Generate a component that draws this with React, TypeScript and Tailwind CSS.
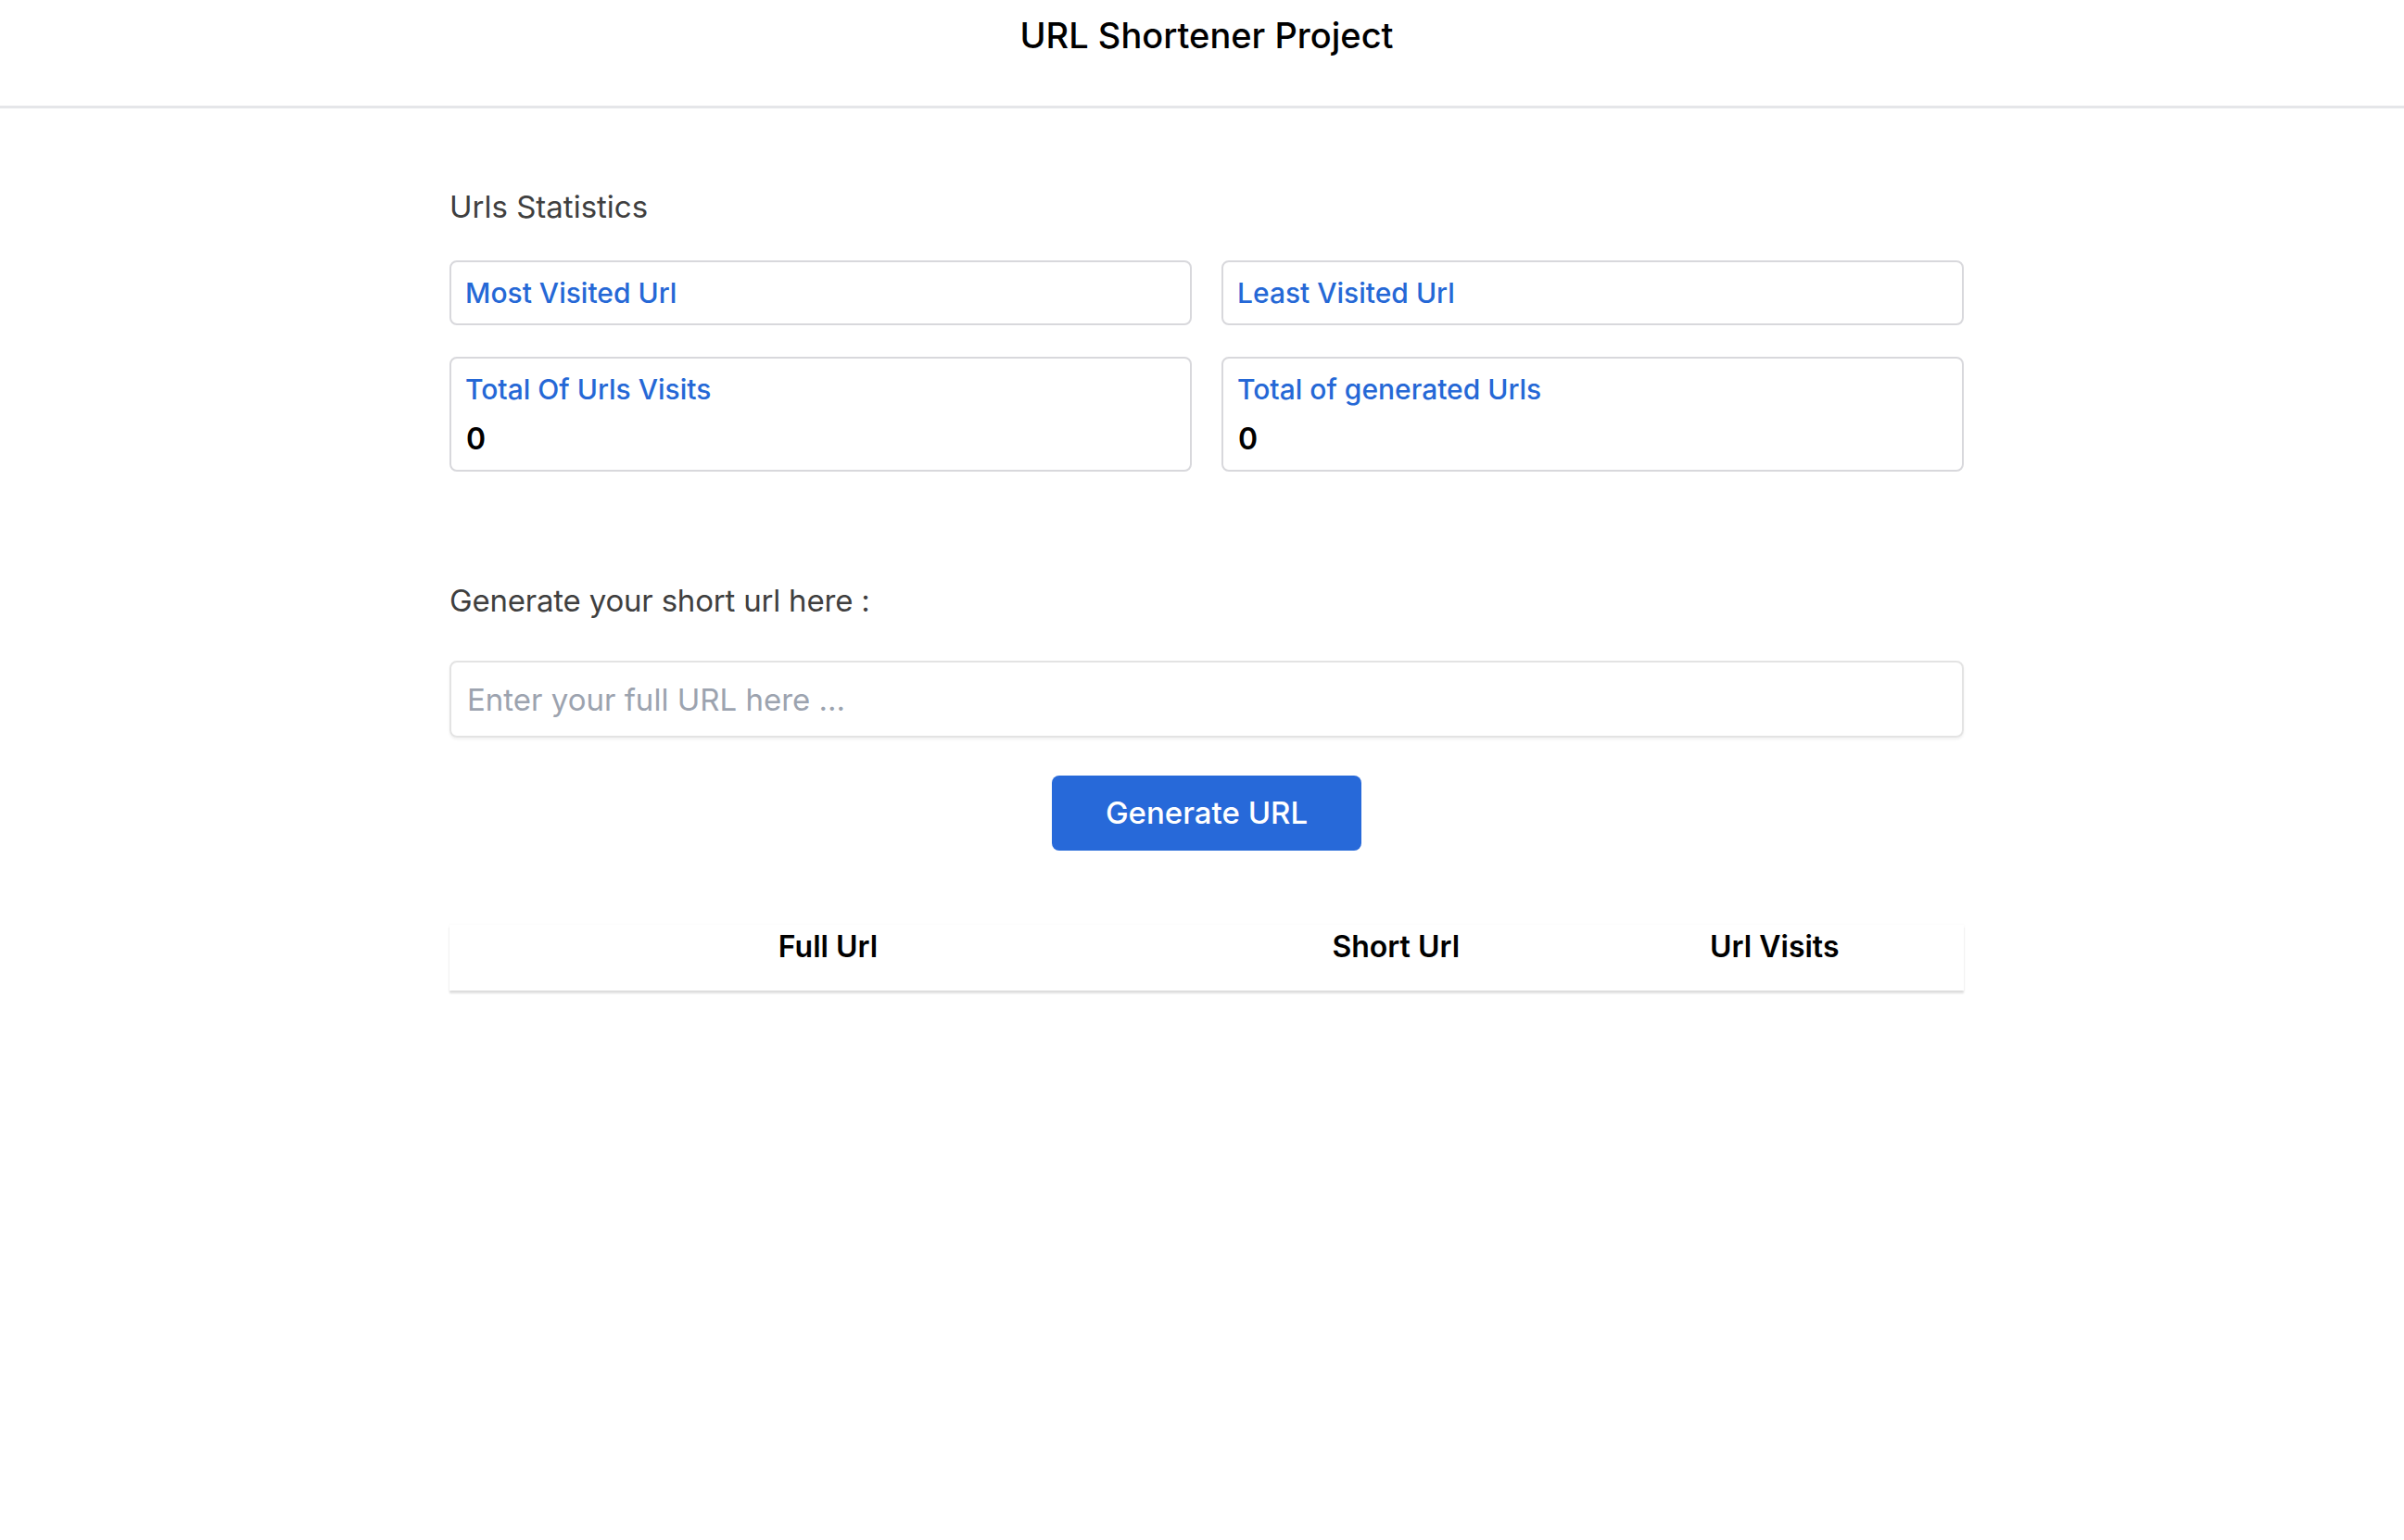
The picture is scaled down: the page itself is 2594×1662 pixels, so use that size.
import React from 'react';

const font = { fontFamily: 'Inter, "Noto Sans", sans-serif' };

const StatCard = ({ label, value }: { label: string; value?: number }) => (
  <div className="border-2 border-[#d8d8dc] rounded-[8px] px-[15px] py-[13px] flex flex-col gap-[14px]">
    <div className="text-[30px] leading-[40px] font-medium text-[#2568d6]">{label}</div>
    {value !== undefined && <div className="text-[32px] leading-[40px] font-semibold text-black pl-[1px]">{value}</div>}
  </div>
);

export default function App() {
  const [url, setUrl] = React.useState('');
  const links: { full: string; short: string; visits: number }[] = [];

  return (
    <div className="min-h-screen bg-white text-black" style={font}>
      <header className="border-b-[3px] border-[#e5e6e9] pl-[10px] pt-[14px] h-[117px]">
        <h1 className="text-center text-[38px] leading-[48px] font-medium">URL Shortener Project</h1>
      </header>

      <main className="pl-[10px]">
        <div className="w-[1634px] mx-auto pt-[86px]">
          <h2 className="text-[33px] leading-[40px] text-[#3f3f3f]">Urls Statistics</h2>

          <div className="grid grid-cols-2 gap-x-[32px] gap-y-[34px] mt-[38px]">
            <StatCard label="Most Visited Url" />
            <StatCard label="Least Visited Url" />
            <StatCard label="Total Of Urls Visits" value={0} />
            <StatCard label="Total of generated Urls" value={0} />
          </div>

          <h2 className="text-[33px] leading-[40px] text-[#3f3f3f] tracking-[-0.2px] mt-[119px]">Generate your short url here :</h2>

          <input
            value={url}
            onChange={e => setUrl(e.target.value)}
            placeholder="Enter your full URL here ..."
            className="mt-[45px] w-full h-[83px] border-2 border-[#e3e3e3] rounded-[8px] px-[17px] text-[33px] text-black placeholder:text-[#9ca3af] shadow-[0_2px_3px_rgba(0,0,0,0.06)] outline-none"
          />

          <div className="flex justify-center mt-[41px]">
            <button className="w-[334px] h-[81px] rounded-[8px] bg-[#2769d9] text-white text-[33px] font-medium">
              Generate URL
            </button>
          </div>

          <table className="w-full mt-[80px] shadow-[0_3px_2px_rgba(0,0,0,0.13),0_0_3px_rgba(0,0,0,0.04)]">
            <thead>
              <tr>
                <th className="w-1/2 align-top pt-[4px] pb-[27px] leading-[40px] text-[32px] font-semibold">Full Url</th>
                <th className="w-1/4 align-top pt-[4px] pb-[27px] leading-[40px] text-[32px] font-semibold">Short Url</th>
                <th className="w-1/4 align-top pt-[4px] pb-[27px] leading-[40px] text-[32px] font-semibold">Url Visits</th>
              </tr>
            </thead>
            <tbody>
              {links.map(l => (
                <tr key={l.short}>
                  <td>{l.full}</td>
                  <td>{l.short}</td>
                  <td>{l.visits}</td>
                </tr>
              ))}
            </tbody>
          </table>
        </div>
      </main>
    </div>
  );
}
